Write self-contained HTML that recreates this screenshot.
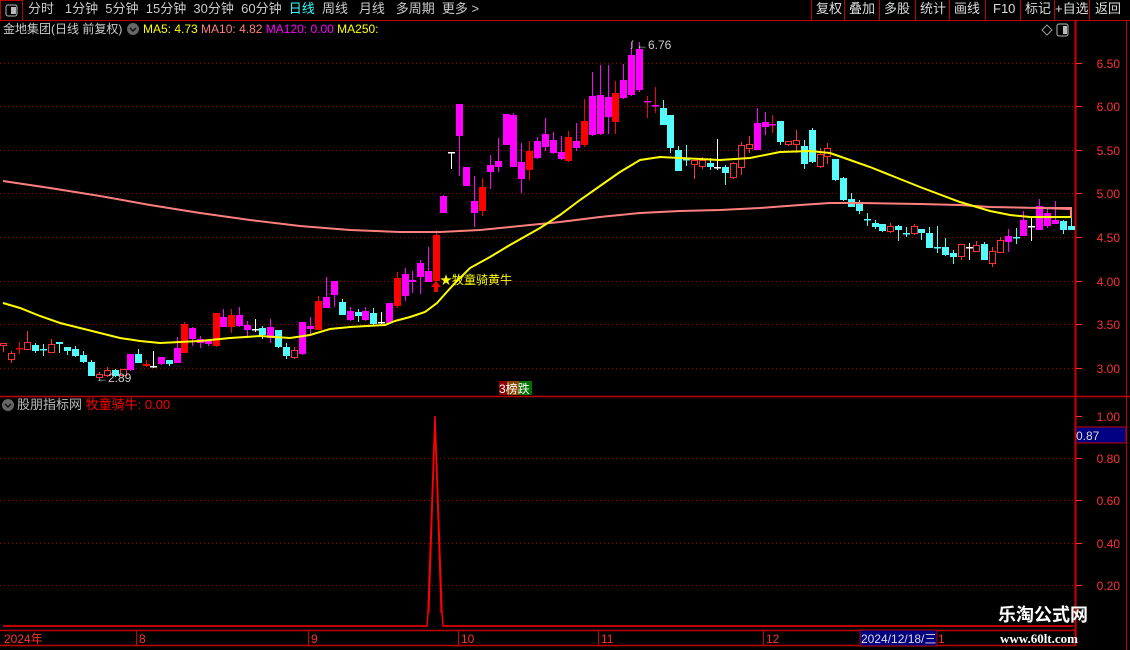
<!DOCTYPE html>
<html><head><meta charset="utf-8"><style>
html,body{margin:0;padding:0;background:#000;width:1130px;height:650px;overflow:hidden}
body{font-family:"Liberation Sans","Noto Sans CJK SC",sans-serif;font-size:12px;position:relative}
.t{position:absolute;white-space:nowrap;line-height:14px}
</style></head><body>
<svg id="s" width="1130" height="650" style="position:absolute;left:0;top:0" xmlns="http://www.w3.org/2000/svg" font-family="Liberation Sans, Noto Sans CJK SC, sans-serif" font-size="12">
<g stroke="#c00000" stroke-width="1" fill="none">
<rect x="0.5" y="0.5" width="22" height="20"/>
<line x1="0" y1="20.5" x2="1130" y2="20.5"/>
<line x1="811.5" y1="0" x2="811.5" y2="20"/><line x1="844.5" y1="0" x2="844.5" y2="20"/><line x1="879.5" y1="0" x2="879.5" y2="20"/><line x1="915.5" y1="0" x2="915.5" y2="20"/><line x1="949.5" y1="0" x2="949.5" y2="20"/><line x1="985.5" y1="0" x2="985.5" y2="20"/><line x1="1020.5" y1="0" x2="1020.5" y2="20"/><line x1="1054.5" y1="0" x2="1054.5" y2="20"/><line x1="1089.5" y1="0" x2="1089.5" y2="20"/>
<line x1="1075.5" y1="20" x2="1075.5" y2="646" stroke="#d00000" stroke-width="2"/>
<line x1="1126.5" y1="20" x2="1126.5" y2="650"/>
<line x1="0" y1="396.5" x2="1130" y2="396.5" stroke-width="1.5"/>
<line x1="0" y1="630.5" x2="1075" y2="630.5" stroke-width="1.5"/>
<line x1="0" y1="645.5" x2="1075" y2="645.5" stroke-width="1.5"/>
</g>
<rect x="6" y="5" width="11" height="11" rx="2" fill="none" stroke="#bbb"/><rect x="11" y="7" width="5" height="7" fill="#bbb"/>
<g id="grid" stroke="#a00000" stroke-dasharray="1,3"></g>
<g id="cand"></g>
<polyline fill="none" stroke="#ff7f7f" stroke-width="2" points="3,181 50,188 100,196 150,205 200,213 250,220 300,226 350,230 400,232 440,232 480,230 520,226 560,222 600,217 640,213 680,211 720,210 760,208 800,205 830,203 860,203 920,204 960,205 990,207 1040,208 1071,209"/>
<polyline fill="none" stroke="#ff7f7f" stroke-width="2" points="1036,208 1071,208 1071,218"/>
<polyline fill="none" stroke="#ffff00" stroke-width="2" points="3,303 20,308 40,316 60,323 80,328 100,333 120,338 140,341 160,343 180,342 200,341 230,338 260,336 290,338 310,335 330,329 350,327 385,325 395,321 410,317 425,312 437,303 445,294 455,283 470,268 490,257 510,245 540,228 560,215 580,200 600,186 620,172 640,160 660,157 680,158 720,160 750,158 780,152 810,151 830,153 850,160 870,167 895,177 920,187 960,202 990,211 1010,215 1030,217 1071,217"/>
<polyline fill="none" stroke="#ff0000" stroke-width="1.5" points="3,626 427,626 428,613 435,416 442,613 443,626 1073,626"/>
<polyline fill="none" stroke="#ff0000" stroke-width="1" points="429,613 435,430 441,613"/>
<g fill="#ff3030" text-anchor="end" font-size="12" id="ax"></g>
<rect x="1076" y="427" width="50" height="16" fill="#000080" stroke="#c00000"/>
<text x="1076" y="440" fill="#ddd">0.87</text>
<g stroke="#d00000"><line x1="136.5" y1="630" x2="136.5" y2="646"/><line x1="308.5" y1="630" x2="308.5" y2="646"/><line x1="458.5" y1="630" x2="458.5" y2="646"/><line x1="598.5" y1="630" x2="598.5" y2="646"/><line x1="763.5" y1="630" x2="763.5" y2="646"/></g>
<g fill="#ff3030" font-size="12"><text x="4" y="643">2024年</text><text x="139" y="643">8</text><text x="311" y="643">9</text><text x="461" y="643">10</text><text x="601" y="643">11</text><text x="766" y="643">12</text><text x="938" y="643">1</text></g>
<rect x="860" y="630" width="77" height="16" fill="#000080" stroke="#c00000"/>
<text x="861" y="643" fill="#ddd">2024/12/18/三</text>
<path d="M436 281 L431 287 L434 287 L434 292 L438 292 L438 287 L441 287 Z" fill="#ff0000"/>
<text x="440" y="284" fill="#ffff00">★牧童骑黄牛</text>
<text x="96" y="382" fill="#ccc">←2.89</text>
<text x="631" y="47" fill="#ccc" font-size="9">ʃ</text>
<text x="636" y="49" fill="#ccc">←6.76</text>
<rect x="499" y="381" width="8" height="14" fill="#8b0000"/><rect x="507" y="381" width="12" height="14" fill="#8b4500"/><rect x="519" y="381" width="13" height="14" fill="#007000"/>
<text x="499" y="393" fill="#fff">3榜跌</text>
<path d="M1047 25 L1052 30 L1047 35 L1042 30 Z" fill="none" stroke="#999"/>
<rect x="1057" y="24" width="11" height="12" rx="2" fill="none" stroke="#bbb"/><rect x="1063" y="26" width="4" height="8" fill="#bbb"/>
<circle cx="133" cy="29" r="6" fill="#666"/><path d="M130 28 L133 31 L136 28" stroke="#111" fill="none" stroke-width="1.5"/>
<circle cx="8" cy="405" r="6" fill="#666"/><path d="M5 404 L8 407 L11 404" stroke="#111" fill="none" stroke-width="1.5"/>
</svg>
<div class="t" style="left:28px;top:2px;color:#ccc;font-size:13px">分时 &nbsp; 1分钟 &nbsp;5分钟 &nbsp;15分钟 &nbsp;30分钟 &nbsp;60分钟 &nbsp;<span style="color:#3ff">日线</span> &nbsp;周线 &nbsp; 月线 &nbsp; 多周期 &nbsp;更多 &gt;</div>
<div class="t" style="left:816px;top:2px;color:#ddd;font-size:13px">复权</div>
<div class="t" style="left:849px;top:2px;color:#ddd;font-size:13px">叠加</div>
<div class="t" style="left:884px;top:2px;color:#ddd;font-size:13px">多股</div>
<div class="t" style="left:920px;top:2px;color:#ddd;font-size:13px">统计</div>
<div class="t" style="left:954px;top:2px;color:#ddd;font-size:13px">画线</div>
<div class="t" style="left:993px;top:2px;color:#ddd;font-size:13px">F10</div>
<div class="t" style="left:1025px;top:2px;color:#ddd;font-size:13px">标记</div>
<div class="t" style="left:1055px;top:2px;color:#ddd;font-size:13px">+自选</div>
<div class="t" style="left:1095px;top:2px;color:#ddd;font-size:13px">返回</div>
<div class="t" style="left:3px;top:22px;color:#ccc;font-size:12px">金地集团(日线 前复权)</div>
<div class="t" style="left:143px;top:22px;font-size:12px"><span style="color:#ff0">MA5: 4.73</span> <span style="color:#ff7f7f">MA10: 4.82</span> <span style="color:#f0f">MA120: 0.00</span> <span style="color:#ff0">MA250:</span></div>
<div class="t" style="left:17px;top:398px;color:#bbb;font-size:13px">股朋指标网 <span style="color:#f00">牧童骑牛: 0.00</span></div>
<div class="t" style="left:998px;top:608px;color:#fff;font-size:18px;font-weight:bold">乐淘公式网</div>
<div class="t" style="left:1000px;top:632px;color:#fff;font-size:13px;font-weight:bold;font-family:'Liberation Serif',serif">www.60lt.com</div>
<script>
var NS="http://www.w3.org/2000/svg";
function el(p,n,a){var e=document.createElementNS(NS,n);for(var k in a)e.setAttribute(k,a[k]);p.appendChild(e);return e;}
var g=document.getElementById('grid');
[63,106,150,193,237,281,324,368].forEach(function(y){el(g,'line',{x1:0,y1:y+.5,x2:1073,y2:y+.5});});
[458,500,543,585].forEach(function(y){el(g,'line',{x1:0,y1:y+.5,x2:1073,y2:y+.5});});
var ax=document.getElementById('ax');
[[63,'6.50'],[106,'6.00'],[150,'5.50'],[193,'5.00'],[237,'4.50'],[281,'4.00'],[324,'3.50'],[368,'3.00'],[416,'1.00'],[458,'0.80'],[500,'0.60'],[543,'0.40'],[585,'0.20']].forEach(function(a){
 var t=el(ax,'text',{x:1120,y:a[0]+5});t.textContent=a[1];
 el(ax,'line',{x1:1076,y1:a[0]+.5,x2:1082,y2:a[0]+.5,stroke:'#ff3030'});
});
var C={m:'#ff00ff',r:'#ff0000',h:'#ff3232',c:'#54fcfc',w:'#ffffff',x:'#54fcfc',M:'#ff00ff'};
var D=[
[3,343,345,343,351,'h'],[11,353,359,351,362,'h'],[19,348,348,342,353,'r'],[27,342,349,331,349,'h'],[35,345,350,343,352,'c'],[43,349,349,344,355,'x'],[51,344,352,339,352,'h'],[59,342,343,342,352,'c'],[67,347,350,347,354,'c'],[75,349,355,346,356,'c'],[83,355,361,351,362,'c'],[91,362,375,360,375,'c'],[99,374,377,372,378,'h'],[107,370,375,367,376,'h'],[115,370,375,369,376,'c'],[123,369,375,369,376,'h'],
[130,354,369,354,370,'m'],[138,354,362,349,362,'c'],[146,364,365,360,366,'r'],[153,366,366,351,367,'w'],[161,357,363,357,364,'m'],[169,360,363,360,365,'c'],[177,348,362,337,362,'m'],[184,324,352,322,352,'r'],[192,328,338,327,345,'m'],[200,339,342,336,347,'m'],[208,341,343,340,345,'m'],[216,313,345,313,346,'r'],[223,317,326,309,326,'m'],[231,315,326,309,332,'r'],[239,315,325,307,326,'m'],[247,325,329,321,337,'m'],[255,329,329,319,331,'w'],[262,328,334,326,338,'c'],[270,327,337,319,342,'m'],[278,330,346,330,347,'c'],[286,347,355,343,358,'c'],[294,350,357,347,358,'h'],[302,322,353,322,354,'m'],[310,326,328,317,333,'m'],[318,301,329,296,329,'r'],[326,297,307,277,307,'m'],[334,281,294,281,306,'m'],[342,302,314,299,314,'c'],[350,311,319,307,320,'m'],[358,312,315,309,321,'c'],[365,311,319,307,320,'m'],[373,313,323,308,324,'c'],[381,322,322,312,323,'w'],[389,303,322,303,323,'m'],[397,278,305,272,307,'r'],[405,274,295,268,300,'m'],[412,280,281,271,292,'m'],[420,263,276,260,293,'m'],[428,271,281,247,281,'m'],[436,235,280,230,280,'r'],
[443,196,212,195,212,'m'],[451,152,152,152,168,'w'],[459,104,135,104,175,'m'],[466,167,185,167,185,'m'],[474,201,212,176,226,'m'],[482,187,210,178,215,'r'],[490,165,171,155,188,'m'],[498,161,166,138,171,'m'],[506,114,144,114,144,'m'],[513,115,166,113,166,'m'],[521,162,178,143,192,'m'],[529,151,169,141,179,'r'],[537,141,157,137,158,'m'],[545,134,146,118,150,'m'],[553,140,152,132,153,'m'],[561,152,158,136,159,'m'],[568,137,160,131,161,'r'],[576,141,147,123,150,'m'],[584,121,144,99,146,'r'],[592,96,134,72,135,'m'],[600,95,133,65,134,'m'],[608,97,116,65,133,'m'],[615,93,121,81,133,'r'],[623,80,97,64,98,'m'],[631,55,94,42,95,'m'],[639,49,89,42,91,'m'],[647,101,101,96,117,'M'],[655,105,105,87,112,'M'],[663,108,124,100,124,'c'],[670,115,147,115,152,'c'],[678,150,170,146,170,'c'],[686,159,159,145,165,'x'],[694,160,164,160,178,'h'],[702,160,166,157,168,'h'],[710,163,166,158,169,'c'],[717,167,167,139,169,'w'],[725,167,172,165,184,'c'],[733,163,177,162,178,'h'],[741,145,167,142,174,'h'],[749,144,148,136,152,'h'],[757,123,149,108,149,'m'],[765,122,126,112,134,'m'],[772,124,124,115,132,'M'],[780,121,141,121,144,'c'],[788,141,144,141,145,'h'],[796,140,144,130,152,'h'],[804,146,163,140,168,'c'],[812,130,161,128,162,'c'],[820,154,166,148,167,'h'],[827,148,156,143,163,'h'],
[835,159,179,159,180,'c'],[843,178,199,177,200,'c'],[851,199,206,193,206,'c'],[859,203,210,200,213,'c'],[867,219,219,213,225,'x'],[875,223,226,220,228,'c'],[882,224,230,224,231,'c'],[890,226,231,223,232,'h'],[898,226,229,225,240,'c'],[906,233,233,227,236,'x'],[914,226,233,224,234,'h'],[921,229,232,229,239,'c'],[929,233,247,227,247,'c'],[937,247,247,226,252,'x'],[945,247,254,238,255,'c'],[953,253,256,250,263,'c'],[961,244,256,244,259,'h'],[969,247,247,243,259,'w'],[976,245,251,241,251,'h'],[984,244,259,242,259,'c'],[992,251,263,247,266,'h'],[1000,240,252,237,252,'h'],[1008,236,241,229,251,'m'],[1016,237,237,228,243,'x'],[1023,220,235,211,235,'m'],[1031,226,226,217,240,'w'],[1039,206,229,199,229,'m'],[1047,213,225,209,227,'m'],[1055,220,223,201,223,'m'],[1063,221,229,220,233,'c'],[1071,226,229,209,229,'c']
];
var cg=document.getElementById('cand');
D.forEach(function(d){
 var x=d[0],t=d[1],b=d[2],hi=d[3],lo=d[4],ty=d[5],col=C[ty];
 var wc=(ty=='M')?'#ff0000':col;
 el(cg,'line',{x1:x+.5,y1:hi,x2:x+.5,y2:lo+1,stroke:wc,'stroke-width':1});
 if(ty=='w'||ty=='x'||ty=='M'||b-t<1){el(cg,'rect',{x:x-3,y:t,width:7,height:Math.max(1.5,b-t),fill:col});}
 else if(ty=='h'){el(cg,'rect',{x:x-2.5,y:t+.5,width:6,height:b-t,fill:'#000',stroke:col,'stroke-width':1});}
 else el(cg,'rect',{x:x-3,y:t,width:7,height:b-t+1,fill:col});
});
</script>
</body></html>
